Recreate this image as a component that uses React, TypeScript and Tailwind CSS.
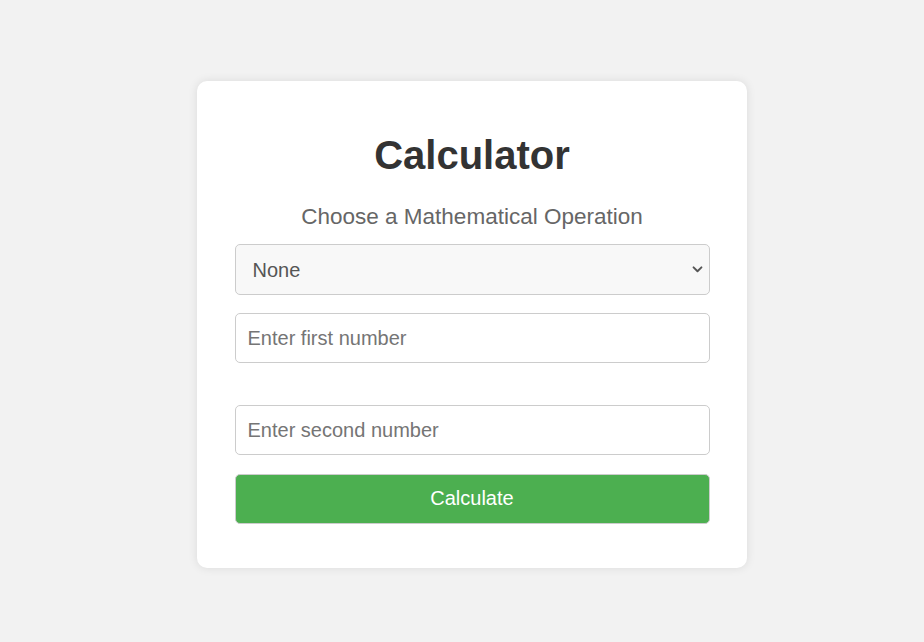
import { useState } from "react"

export default function App() {
  const [operation, setOperation] = useState("none")
  const [first, setFirst] = useState("")
  const [second, setSecond] = useState("")

  return (
    <div className="min-h-screen bg-[#f2f2f2] pt-[81px] pl-[197px] font-['Liberation_Sans',Arial,sans-serif]">
      {/* Calculator card */}
      <div className="w-[550px] bg-white rounded-[10px] shadow-[0_0_10px_rgba(0,0,0,0.1)] pt-[51px] pb-[44px] flex flex-col items-center">
        <h1 className="text-[40px] leading-[46px] font-bold text-[#333]">Calculator</h1>
        <p className="mt-[25.5px] text-[22.5px] leading-[26px] text-[#666]">Choose a Mathematical Operation</p>

        <div className="w-[475px] mt-[14.5px] flex flex-col">
          <div className="relative">
            <select
              value={operation}
              onChange={(e) => setOperation(e.target.value)}
              className="appearance-none h-[51px] w-full pl-[17px] pr-[36px] text-[20px] text-[#555] bg-[#f8f8f8] border border-[#ccc] rounded-[5px] outline-none"
            >
              <option value="none">None</option>
              <option value="add">Addition</option>
              <option value="subtract">Subtraction</option>
              <option value="multiply">Multiplication</option>
              <option value="divide">Division</option>
            </select>
            <svg
              viewBox="0 0 12 8"
              className="pointer-events-none absolute right-[7px] top-[22px] w-[11px] h-[7px]"
              fill="none"
              stroke="#555"
              strokeWidth="2.2"
              strokeLinecap="round"
              strokeLinejoin="round"
            >
              <path d="M1.5 1.5 L6 6 L10.5 1.5" />
            </svg>
          </div>

          <input
            type="number"
            placeholder="Enter first number"
            value={first}
            onChange={(e) => setFirst(e.target.value)}
            className="mt-[18px] h-[50px] w-full px-[12px] text-[20px] text-[#333] placeholder:text-[#757575] bg-white border border-[#ccc] rounded-[5px] outline-none"
          />

          <input
            type="number"
            placeholder="Enter second number"
            value={second}
            onChange={(e) => setSecond(e.target.value)}
            className="mt-[42px] h-[50px] w-full px-[12px] text-[20px] text-[#333] placeholder:text-[#757575] bg-white border border-[#ccc] rounded-[5px] outline-none"
          />

          <button className="mt-[19px] h-[50px] w-full text-[20px] leading-[22px] pb-[2px] text-white bg-[#4caf50] border border-[#ccc] rounded-[5px]">
            Calculate
          </button>
        </div>
      </div>
    </div>
  )
}
